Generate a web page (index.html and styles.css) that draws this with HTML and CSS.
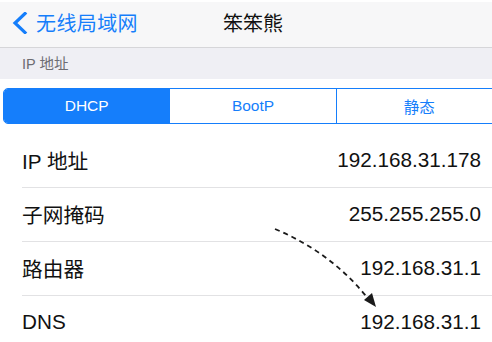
FILE: index.html
```html
<!DOCTYPE html>
<html lang="zh">
<head>
<meta charset="utf-8">
<link rel="stylesheet" href="styles.css">
</head>
<body>
<div class="screen">
  <header class="nav">
    <div class="back">
      <svg class="chev" width="16" height="22" viewBox="0 0 16 22"><path d="M13 1.5 L3 11 L13 20.5" fill="none" stroke="#157efb" stroke-width="3.2" stroke-linecap="square"/></svg>
      <span class="back-text">无线局域网</span>
    </div>
    <div class="title">笨笨熊</div>
  </header>
  <div class="section">IP 地址</div>
  <div class="gap"></div>
  <div class="seg">
    <div class="seg-item active">DHCP</div>
    <div class="seg-item">BootP</div>
    <div class="seg-item">静态</div>
  </div>
  <ul class="list">
    <li class="row"><span class="label">IP 地址</span><span class="value">192.168.31.178</span></li>
    <li class="row"><span class="label">子网掩码</span><span class="value">255.255.255.0</span></li>
    <li class="row"><span class="label">路由器</span><span class="value">192.168.31.1</span></li>
    <li class="row"><span class="label">DNS</span><span class="value">192.168.31.1</span></li>
  </ul>
  <svg class="arrow" width="492" height="342" viewBox="0 0 492 342">
    <path d="M275 229 Q330 252 366 296" fill="none" stroke="#1a1a1a" stroke-width="1.8" stroke-dasharray="5 4"/>
    <polygon points="376,307 364,300 372,293" fill="#1a1a1a"/>
  </svg>
</div>
</body>
</html>
```
FILE: styles.css
```css
* { box-sizing: border-box; }
html, body { margin: 0; padding: 0; background: #fff; }
body {
  width: 492px;
  height: 342px;
  overflow: hidden;
  font-family: "Liberation Sans", "Noto Sans CJK SC", sans-serif;
}
.screen { position: relative; width: 492px; height: 342px; overflow: hidden; }
.nav {
  margin-top: 2px;
  height: 46px;
  background: #f7f7f8;
  border-bottom: 1px solid #d6d6d9;
  display: flex;
  align-items: center;
  gap: 85px;
  padding-left: 12px;
  padding-bottom: 4px;
}
.back { display: flex; align-items: center; gap: 8px; }
.chev { display: block; margin-top: 1px; }
.back-text { color: #157efb; font-size: 20px; letter-spacing: 0.4px; }
.title { color: #111; font-size: 20px; letter-spacing: 0; }
.section {
  height: 31px;
  background: #efeff4;
  color: #6d6d72;
  font-size: 14.5px;
  padding-left: 22px;
  display: flex;
  align-items: center;
  padding-bottom: 2px;
}
.gap { height: 9px; }
.seg {
  margin-left: 3px;
  width: 500px;
  height: 36px;
  border: 1px solid #157efb;
  border-radius: 5px;
  display: flex;
  overflow: hidden;
}
.seg-item {
  flex: 1;
  display: flex;
  align-items: center;
  justify-content: center;
  color: #157efb;
  font-size: 15.5px;
  border-left: 1px solid #157efb;
}
.seg-item:first-child { border-left: none; }
.seg-item.active { background: #157efb; color: #fff; }
.list { list-style: none; margin: 10px 0 0 0; padding: 0 0 0 22px; }
.row {
  height: 54px;
  border-bottom: 1px solid #e2e2e4;
  display: flex;
  align-items: center;
  justify-content: space-between;
  padding-right: 11px;
  padding-bottom: 1px;
  font-size: 20.7px;
  color: #111;
}
.arrow { position: absolute; left: 0; top: 0; pointer-events: none; }
```
